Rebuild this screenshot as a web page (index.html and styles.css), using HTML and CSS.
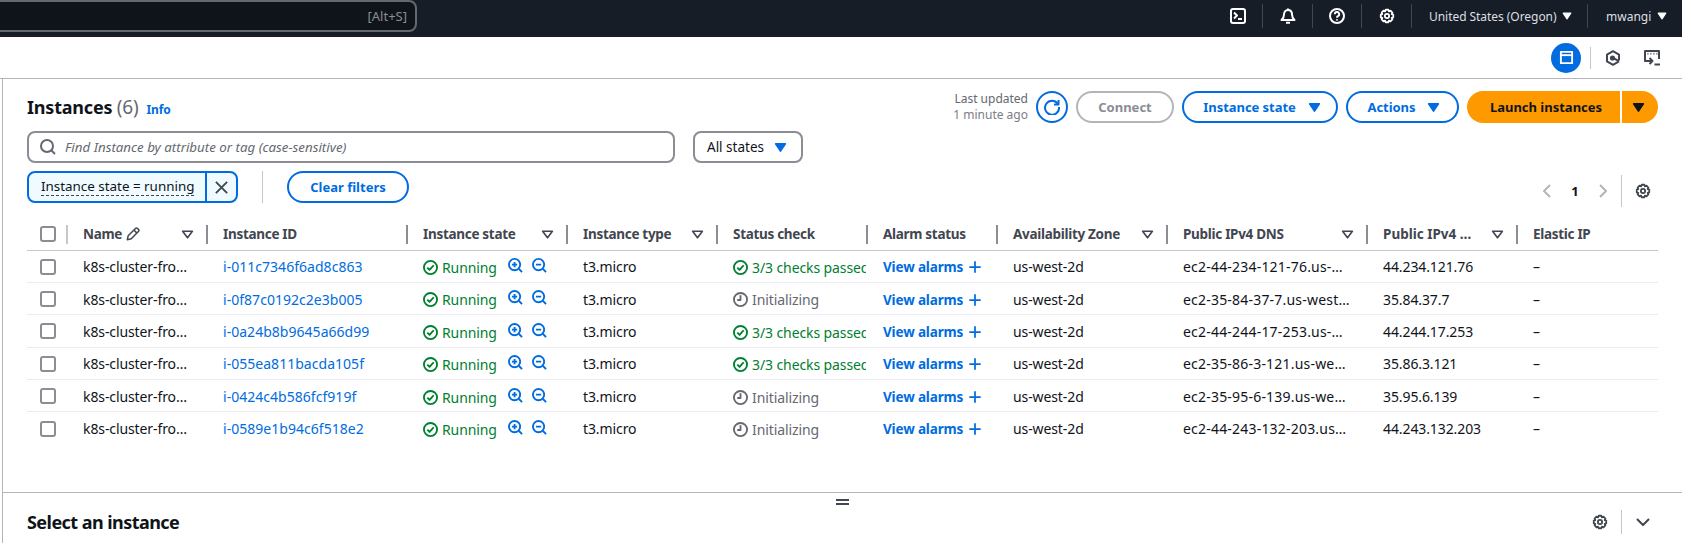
FILE: index.html
```html
<!DOCTYPE html>
<html lang="en">
<head>
<meta charset="utf-8">
<title>Instances | EC2</title>
<link rel="stylesheet" href="styles.css">
</head>
<body>
<svg class="defs" aria-hidden="true">
  <symbol id="i-gear" viewBox="-9 -9 18 18"><path d="M7.04-1.5 7.04 1.5 5.27 2.18 6.04 3.92 3.92 6.04 2.18 5.27 1.5 7.04-1.5 7.04-2.18 5.27-3.92 6.04-6.04 3.92-5.27 2.18-7.04 1.5-7.04-1.5-5.27-2.18-6.04-3.92-3.92-6.04-2.18-5.27-1.5-7.04 1.5-7.04 2.18-5.27 3.92-6.04 6.04-3.92 5.27-2.18Z"/><circle r="2.4"/></symbol>
  <symbol id="i-check" viewBox="0 0 16 16"><circle cx="8" cy="8" r="7"/><path d="M4.6 8.2 7 10.6l4.4-5"/></symbol>
  <symbol id="i-clock" viewBox="0 0 16 16"><circle cx="8" cy="8" r="7"/><path d="M8 3.5v5H4.5"/></symbol>
  <symbol id="i-zin" viewBox="0 0 16 16"><circle cx="7" cy="7" r="6"/><path d="M11.5 11.5 15 15M4.2 7h5.600M7 4.2v5.600"/></symbol>
  <symbol id="i-zout" viewBox="0 0 16 16"><circle cx="7" cy="7" r="6"/><path d="M11.5 11.5 15 15M4.2 7h5.600"/></symbol>
  <symbol id="i-plus" viewBox="0 0 16 16"><path d="M8 1.5v13M1.5 8h13"/></symbol>
  <symbol id="i-x" viewBox="0 0 16 16"><path d="M2 2l12 12M14 2 2 14"/></symbol>
  <symbol id="i-search" viewBox="0 0 16 16"><circle cx="7" cy="7" r="6"/><path d="M11.5 11.5 15 15"/></symbol>
  <symbol id="i-filter" viewBox="0 0 16 16"><path d="M2 4h12l-6 8Z"/></symbol>
  <symbol id="i-caret" viewBox="0 0 16 16"><path class="solid" d="M2 3.500h12l-6 9Z"/></symbol>
  <symbol id="i-refresh" viewBox="0 0 16 16"><path d="M13.800 4.800A7 7 0 1 0 15 8"/><path d="M14.500 1v4.500H10"/></symbol>
  <symbol id="i-term" viewBox="0 0 16 16"><rect x="1" y="1" width="14" height="14" rx="2"/><path d="M4 4.500 7 7.500 4 10.500M8 11h4"/></symbol>
  <symbol id="i-bell" viewBox="0 0 16 16"><path d="M8 2c-2.600 0-4 2-4 4.500 0 2.800-1 4.200-2.500 5.500h13C13 10.700 12 9.300 12 6.500 12 4 10.600 2 8 2Z"/><path d="M8 .5V2M6 14.800h4"/></symbol>
  <symbol id="i-help" viewBox="0 0 16 16"><circle cx="8" cy="8" r="7"/><path d="M5.800 6.200A2.200 2.200 0 1 1 9 8.200c-.7.400-1 .9-1 1.500M8 11.300v1.200"/></symbol>
  <symbol id="i-panel" viewBox="0 0 16 16"><rect x="2" y="2" width="12" height="12"/><path d="M2 5.500h12"/></symbol>
  <symbol id="i-hex" viewBox="0 0 16 16"><path d="M14 10.500V4.600L8 1.200 2 4.600V11.400L8 14.800 14 11.400"/><path d="M8 8 13.500 10.800"/><circle class="solid" cx="7.500" cy="8" r="1.600"/></symbol>
  <symbol id="i-cloud" viewBox="0 0 16 16"><path d="M5 11H1V1h14v8"/><path d="M3.500 3.800h.9M6.500 3.800h.9M9.500 3.800h.9M12.500 3.800h.9"/><path d="M5.500 8 8.500 11 5.500 14M3 11h5M10.500 14.500H16"/></symbol>
  <symbol id="i-pencil" viewBox="0 0 16 16"><path d="M1.500 14.500 2.500 10 10.800 1.700a1.700 1.700 0 0 1 2.400 0l1 1a1.700 1.700 0 0 1 0 2.400L6 13.500Z"/><path d="M9 3.500l3.500 3.500"/></symbol>
  <symbol id="i-left" viewBox="0 0 16 16"><path d="M11 2 5 8l6 6"/></symbol>
  <symbol id="i-right" viewBox="0 0 16 16"><path d="M5 2l6 6-6 6"/></symbol>
  <symbol id="i-down" viewBox="0 0 16 16"><path d="M2 5l6 6 6-6"/></symbol>
</svg>

<header class="topbar">
  <div class="global-search"><span>[Alt+S]</span></div>
  <nav class="topnav">
    <div class="nav-cell nav-term"><svg class="ico ico-16"><use href="#i-term"/></svg></div>
    <div class="nav-cell nav-bell"><svg class="ico ico-16"><use href="#i-bell"/></svg></div>
    <div class="nav-cell nav-help"><svg class="ico ico-16"><use href="#i-help"/></svg></div>
    <div class="nav-cell nav-gear"><svg class="ico ico-16"><use href="#i-gear"/></svg></div>
    <div class="nav-cell nav-region">United States (Oregon)<svg class="ico ico-caret"><use href="#i-caret"/></svg></div>
    <div class="nav-cell nav-user">mwangi<svg class="ico ico-caret"><use href="#i-caret"/></svg></div>
  </nav>
</header>

<div class="subbar">
  <span class="panel-btn"><svg class="ico ico-panel"><use href="#i-panel"/></svg></span>
  <span class="sub-divider"></span>
  <svg class="ico ico-16 sub-hex"><use href="#i-hex"/></svg>
  <svg class="ico ico-16 sub-cloud"><use href="#i-cloud"/></svg>
</div>

<main class="main">
  <div class="head-row">
    <h1 class="title">Instances <span class="count">(6)</span><a class="info">Info</a></h1>
    <div class="actions">
      <div class="updated">Last updated<br><span>1 minute ago</span></div>
      <button class="btn btn-icon"><svg class="ico ico-16"><use href="#i-refresh"/></svg></button>
      <button class="btn btn-off">Connect</button>
      <button class="btn btn-state">Instance state<svg class="ico ico-caret"><use href="#i-caret"/></svg></button>
      <button class="btn btn-actions">Actions<svg class="ico ico-caret"><use href="#i-caret"/></svg></button>
      <div class="launch">
        <button class="launch-main">Launch instances</button>
        <button class="launch-drop"><svg class="ico ico-caret"><use href="#i-caret"/></svg></button>
      </div>
    </div>
  </div>

  <div class="search-row">
    <div class="search-box"><svg class="ico ico-16"><use href="#i-search"/></svg><span>Find Instance by attribute or tag (case-sensitive)</span></div>
    <div class="state-select">All states<svg class="ico ico-caret"><use href="#i-caret"/></svg></div>
  </div>

  <div class="filter-row">
    <div class="token">
      <span class="token-text"><span>Instance state = running</span></span>
      <span class="token-x"><svg class="ico ico-x"><use href="#i-x"/></svg></span>
    </div>
    <span class="filter-divider"></span>
    <button class="btn btn-clear">Clear filters</button>
    <div class="pager">
      <svg class="ico ico-16 muted"><use href="#i-left"/></svg>
      <span class="page-num">1</span>
      <svg class="ico ico-16 muted"><use href="#i-right"/></svg>
      <span class="pager-divider"></span>
      <svg class="ico ico-16 pager-gear"><use href="#i-gear"/></svg>
    </div>
  </div>

  <table class="grid">
    <colgroup>
      <col class="c-check"><col class="c-name"><col class="c-id"><col class="c-state"><col class="c-type"><col class="c-status"><col class="c-alarm"><col class="c-az"><col class="c-dns"><col class="c-ip"><col class="c-eip">
    </colgroup>
    <thead>
      <tr>
        <th class="th-check"><span class="box"></span></th>
        <th><div class="th-in th-first"><span class="th-label">Name <svg class="ico ico-pencil"><use href="#i-pencil"/></svg></span><svg class="ico ico-filter"><use href="#i-filter"/></svg></div></th>
        <th><div class="th-in"><span class="th-label">Instance ID</span></div></th>
        <th><div class="th-in"><span class="th-label">Instance state</span><svg class="ico ico-filter"><use href="#i-filter"/></svg></div></th>
        <th><div class="th-in"><span class="th-label">Instance type</span><svg class="ico ico-filter"><use href="#i-filter"/></svg></div></th>
        <th><div class="th-in"><span class="th-label">Status check</span></div></th>
        <th><div class="th-in"><span class="th-label">Alarm status</span></div></th>
        <th><div class="th-in"><span class="th-label">Availability Zone</span><svg class="ico ico-filter"><use href="#i-filter"/></svg></div></th>
        <th><div class="th-in"><span class="th-label">Public IPv4 DNS</span><svg class="ico ico-filter"><use href="#i-filter"/></svg></div></th>
        <th><div class="th-in"><span class="th-label th-clip">Public IPv4 address</span><svg class="ico ico-filter"><use href="#i-filter"/></svg></div></th>
        <th><div class="th-in"><span class="th-label">Elastic IP</span></div></th>
      </tr>
    </thead>
    <tbody>
      <tr>
        <td class="td-check"><span class="box"></span></td><td class="name">k8s-cluster-frontend</td><td><a class="link">i-011c7346f6ad8c863</a></td>
        <td><span class="run"><svg class="ico ico-status"><use href="#i-check"/></svg>Running</span><span class="zooms"><svg class="ico ico-zoom"><use href="#i-zin"/></svg><svg class="ico ico-zoom"><use href="#i-zout"/></svg></span></td>
        <td>t3.micro</td><td class="clip"><span class="run"><svg class="ico ico-status"><use href="#i-check"/></svg>3/3 checks passed</span></td>
        <td class="clip"><a class="alarm">View alarms<svg class="ico ico-plus"><use href="#i-plus"/></svg></a></td><td>us-west-2d</td><td class="dns">ec2-44-234-121-76.us-west-2.compute.amazonaws.com</td><td>44.234.121.76</td><td>–</td>
      </tr>
      <tr>
        <td class="td-check"><span class="box"></span></td><td class="name">k8s-cluster-frontend</td><td><a class="link">i-0f87c0192c2e3b005</a></td>
        <td><span class="run"><svg class="ico ico-status"><use href="#i-check"/></svg>Running</span><span class="zooms"><svg class="ico ico-zoom"><use href="#i-zin"/></svg><svg class="ico ico-zoom"><use href="#i-zout"/></svg></span></td>
        <td>t3.micro</td><td class="clip"><span class="init"><svg class="ico ico-status"><use href="#i-clock"/></svg>Initializing</span></td>
        <td class="clip"><a class="alarm">View alarms<svg class="ico ico-plus"><use href="#i-plus"/></svg></a></td><td>us-west-2d</td><td class="dns">ec2-35-84-37-7.us-west-2.compute.amazonaws.com</td><td>35.84.37.7</td><td>–</td>
      </tr>
      <tr>
        <td class="td-check"><span class="box"></span></td><td class="name">k8s-cluster-frontend</td><td><a class="link">i-0a24b8b9645a66d99</a></td>
        <td><span class="run"><svg class="ico ico-status"><use href="#i-check"/></svg>Running</span><span class="zooms"><svg class="ico ico-zoom"><use href="#i-zin"/></svg><svg class="ico ico-zoom"><use href="#i-zout"/></svg></span></td>
        <td>t3.micro</td><td class="clip"><span class="run"><svg class="ico ico-status"><use href="#i-check"/></svg>3/3 checks passed</span></td>
        <td class="clip"><a class="alarm">View alarms<svg class="ico ico-plus"><use href="#i-plus"/></svg></a></td><td>us-west-2d</td><td class="dns">ec2-44-244-17-253.us-west-2.compute.amazonaws.com</td><td>44.244.17.253</td><td>–</td>
      </tr>
      <tr>
        <td class="td-check"><span class="box"></span></td><td class="name">k8s-cluster-frontend</td><td><a class="link">i-055ea811bacda105f</a></td>
        <td><span class="run"><svg class="ico ico-status"><use href="#i-check"/></svg>Running</span><span class="zooms"><svg class="ico ico-zoom"><use href="#i-zin"/></svg><svg class="ico ico-zoom"><use href="#i-zout"/></svg></span></td>
        <td>t3.micro</td><td class="clip"><span class="run"><svg class="ico ico-status"><use href="#i-check"/></svg>3/3 checks passed</span></td>
        <td class="clip"><a class="alarm">View alarms<svg class="ico ico-plus"><use href="#i-plus"/></svg></a></td><td>us-west-2d</td><td class="dns">ec2-35-86-3-121.us-west-2.compute.amazonaws.com</td><td>35.86.3.121</td><td>–</td>
      </tr>
      <tr>
        <td class="td-check"><span class="box"></span></td><td class="name">k8s-cluster-frontend</td><td><a class="link">i-0424c4b586fcf919f</a></td>
        <td><span class="run"><svg class="ico ico-status"><use href="#i-check"/></svg>Running</span><span class="zooms"><svg class="ico ico-zoom"><use href="#i-zin"/></svg><svg class="ico ico-zoom"><use href="#i-zout"/></svg></span></td>
        <td>t3.micro</td><td class="clip"><span class="init"><svg class="ico ico-status"><use href="#i-clock"/></svg>Initializing</span></td>
        <td class="clip"><a class="alarm">View alarms<svg class="ico ico-plus"><use href="#i-plus"/></svg></a></td><td>us-west-2d</td><td class="dns">ec2-35-95-6-139.us-west-2.compute.amazonaws.com</td><td>35.95.6.139</td><td>–</td>
      </tr>
      <tr class="last">
        <td class="td-check"><span class="box"></span></td><td class="name">k8s-cluster-frontend</td><td><a class="link">i-0589e1b94c6f518e2</a></td>
        <td><span class="run"><svg class="ico ico-status"><use href="#i-check"/></svg>Running</span><span class="zooms"><svg class="ico ico-zoom"><use href="#i-zin"/></svg><svg class="ico ico-zoom"><use href="#i-zout"/></svg></span></td>
        <td>t3.micro</td><td class="clip"><span class="init"><svg class="ico ico-status"><use href="#i-clock"/></svg>Initializing</span></td>
        <td class="clip"><a class="alarm">View alarms<svg class="ico ico-plus"><use href="#i-plus"/></svg></a></td><td>us-west-2d</td><td class="dns">ec2-44-243-132-203.us-west-2.compute.amazonaws.com</td><td>44.243.132.203</td><td>–</td>
      </tr>
    </tbody>
  </table>
</main>

<section class="split">
  <div class="handle"></div>
  <div class="split-row">
    <h2 class="split-title">Select an instance</h2>
    <div class="split-tools">
      <svg class="ico ico-16"><use href="#i-gear"/></svg>
      <span class="split-divider"></span>
      <svg class="ico ico-16"><use href="#i-down"/></svg>
    </div>
  </div>
</section>
</body>
</html>
```

FILE: styles.css
```css
* { box-sizing: border-box; }
html, body { margin: 0; height: 543px; overflow: hidden; background: #fff; }
body { font-family: "Noto Sans", "Open Sans", sans-serif; font-size: 14px; color: #0f141a; }
.defs { display: none; }
.ico { display: block; flex: none; fill: none; stroke: currentColor; stroke-width: 2; stroke-linejoin: round; }
.solid { fill: currentColor; stroke: currentColor; }
.ico-16 { width: 16px; height: 16px; }
.ico-caret { width: 13px; height: 13px; fill: currentColor; }
button { font: inherit; cursor: default; }

/* top bar */
.topbar { height: 37px; background: #161d26; display: flex; justify-content: space-between; color: #fff; }
.global-search { width: 427px; height: 32px; margin-left: -10px; background: #0f141a; border: 2px solid #656871; border-radius: 8px; display: flex; align-items: center; justify-content: flex-end; padding-right: 8px; color: #8c8c94; font-size: 13px; }
.topnav { display: flex; padding-top: 4px; height: 28px; }
.nav-cell { height: 24px; display: flex; align-items: center; justify-content: center; border-left: 1px solid #424650; color: #fff; }
.nav-term { width: 49px; border-left: 0; }
.nav-bell { width: 50px; }
.nav-help { width: 49px; }
.nav-gear { width: 50px; }
.nav-region { width: 176px; justify-content: flex-start; padding-left: 17px; gap: 5px; font-size: 12px; letter-spacing: -0.05px; color: #dedee3; }
.nav-user { width: 95px; justify-content: flex-start; padding-left: 18px; gap: 6px; font-size: 12px; color: #dedee3; }
.nav-region .ico-caret, .nav-user .ico-caret { width: 10px; height: 10px; color: #fff; }

/* sub bar */
.subbar { height: 42px; border-bottom: 1px solid #b4b4bb; display: flex; align-items: center; padding-left: 1551px; }
.panel-btn { width: 30px; height: 30px; border-radius: 50%; background: #006ce0; color: #fff; display: flex; align-items: center; justify-content: center; }
.ico-panel { width: 15px; height: 15px; }
.sub-divider { width: 1px; height: 22px; background: #c6c6cd; margin-left: 9px; }
.sub-hex { margin-left: 14px; color: #424650; }
.sub-cloud { margin-left: 23px; color: #424650; }

/* main */
.main { margin-left: 2px; height: 413px; border-left: 1px solid #b4b4bb; padding: 12px 24px 0; }
.head-row { display: flex; justify-content: space-between; height: 32px; }
.title { margin: 4px 0 0; font-size: 18px; font-weight: 700; line-height: 24px; letter-spacing: -0.2px; }
.count { font-weight: 400; color: #656871; font-size: 19px; }
.info { font-size: 12px; font-weight: 700; color: #006ce0; margin-left: 8px; letter-spacing: -0.1px; }
.actions { display: flex; align-items: center; gap: 8px; }
.updated { font-size: 12px; line-height: 16px; text-align: right; color: #656871; margin-top: -1px; }
.updated span { color: #7d7d86; }
.btn { height: 32px; border: 2px solid #006ce0; border-radius: 16px; background: #fff; color: #006ce0; font-weight: 700; font-size: 13px; display: flex; align-items: center; justify-content: center; padding: 0; }
.btn-icon { width: 32px; }
.btn-off { width: 98px; border-color: #b4b4bb; color: #8c8c94; }
.btn-state { width: 156px; gap: 12px; letter-spacing: -0.05px; padding-left: 4px; }
.btn-actions { width: 113px; gap: 12px; letter-spacing: -0.05px; padding-left: 3px; }
.btn-clear { width: 122px; }
.launch { display: flex; height: 32px; gap: 2px; }
.launch button { border: 0; background: #ff9900; color: #0f141a; font-weight: 700; font-size: 13px; padding: 0; }
.launch-main { width: 153px; border-radius: 16px 0 0 16px; padding-left: 5px !important; }
.launch-drop { width: 36px; border-radius: 0 16px 16px 0; display: flex; align-items: center; justify-content: center; padding-right: 4px !important; }

.search-row { display: flex; gap: 18px; margin-top: 8px; }
.search-box { width: 648px; height: 32px; border: 2px solid #8c8c94; border-radius: 8px; display: flex; align-items: center; gap: 9px; padding-left: 11px; color: #656871; font-size: 13.3px; }
.search-box span { font-style: italic; }
.state-select { width: 110px; height: 32px; border: 2px solid #8c8c94; border-radius: 8px; display: flex; align-items: center; gap: 10px; padding-left: 12px; font-size: 13.5px; color: #0f141a; }
.state-select .ico-caret { color: #006ce0; }

.filter-row { display: flex; margin-top: 8px; height: 36px; }
.token { width: 211px; height: 32px; border: 2px solid #006ce0; border-radius: 8px; background: #f0fbff; display: flex; }
.token-text { width: 178px; border-right: 2px solid #006ce0; padding-left: 12px; display: flex; align-items: center; white-space: nowrap; font-size: 13.4px; }
.token-text span { border-bottom: 1px dashed #424650; line-height: 17px; }
.token-x { flex: 1; display: flex; align-items: center; justify-content: center; color: #424650; }
.ico-x { width: 15px; height: 15px; }
.filter-divider { width: 1px; height: 32px; background: #c6c6cd; margin-left: 24px; }
.btn-clear { margin-left: 24px; }
.pager { margin-left: auto; display: flex; align-items: center; height: 32px; margin-top: 4px; color: #424650; padding-right: 7px; }
.muted { color: #b4b4bb; }
.page-num { width: 40px; text-align: center; font-weight: 700; font-size: 13px; color: #0f141a; }
.pager-divider { width: 1px; height: 32px; background: #c6c6cd; margin-left: 10px; }
.pager-gear { margin-left: 13px; }

/* table */
.grid { width: 1631px; table-layout: fixed; border-collapse: collapse; margin-top: 12px; }
.c-check { width: 39px; } .c-name { width: 140px; } .c-id { width: 200px; } .c-state { width: 160px; }
.c-type { width: 150px; } .c-status { width: 150px; } .c-alarm { width: 130px; } .c-az { width: 170px; }
.c-dns { width: 200px; } .c-ip { width: 150px; } .c-eip { width: 142px; }
.grid th { height: 31px; padding: 0; border-bottom: 1px solid #c6c6cd; text-align: left; font-size: 13.5px; font-weight: 700; letter-spacing: -0.3px; color: #424650; }
.th-in { display: flex; align-items: center; justify-content: space-between; height: 19px; border-left: 2px solid #8c8c94; padding: 0 12px 0 15px; gap: 4px; }
.th-first { border-left-color: #c6c6cd; }
.th-label { display: flex; align-items: center; gap: 4px; white-space: nowrap; }
.th-clip { display: block; max-width: 95px; overflow: hidden; text-overflow: ellipsis; letter-spacing: 0; }
.ico-filter { width: 13px; height: 13px; }
.ico-pencil { width: 14px; height: 14px; stroke-width: 1.7; }
.th-check { padding-left: 13px !important; }
.box { display: block; width: 16px; height: 16px; border: 2px solid #8c8c94; border-radius: 3px; background: #fff; }
.grid td { height: 32.4px; padding: 1px 15px 0 17px; border-bottom: 1px solid #ebebf0; white-space: nowrap; overflow: hidden; text-overflow: ellipsis; font-size: 14px; letter-spacing: -0.1px; }
.grid tr.last td { border-bottom: 0; }
.grid td.td-check { padding-left: 13px; padding-right: 0; }
.grid td.clip { padding-right: 0; text-overflow: clip; }
.grid td.dns { padding-right: 16px; letter-spacing: 0.2px; }
.link { color: #006ce0; letter-spacing: 0.03px; }
.run, .init { display: inline-flex; align-items: center; gap: 4px; vertical-align: middle; }
.run { color: #00802f; }
.init { color: #656871; }
.ico-status { width: 15px; height: 15px; }
.zooms { display: inline-flex; gap: 9px; margin-left: 11px; color: #006ce0; vertical-align: middle; margin-top: -4px; }
.ico-zoom { width: 15px; height: 15px; }
.alarm { display: inline-flex; align-items: center; gap: 5px; color: #006ce0; font-weight: 700; font-size: 13.5px; letter-spacing: -0.15px; }
.ico-plus { width: 14px; height: 14px; }

/* split panel */
.split { margin-left: 2px; border-left: 1px solid #b4b4bb; border-top: 1px solid #b4b4bb; height: 51px; padding: 0 24px; }
.handle { width: 13px; height: 6px; margin: 6px auto 0; border-top: 2px solid #424650; border-bottom: 2px solid #424650; }
.split-row { display: flex; justify-content: space-between; align-items: center; height: 24px; margin-top: 5px; }
.split-title { margin: 0; font-size: 18px; font-weight: 700; letter-spacing: -0.55px; }
.split-tools { display: flex; align-items: center; color: #424650; padding-right: 7px; }
.split-divider { width: 1px; height: 24px; background: #c6c6cd; margin: 0 13px; }
```
